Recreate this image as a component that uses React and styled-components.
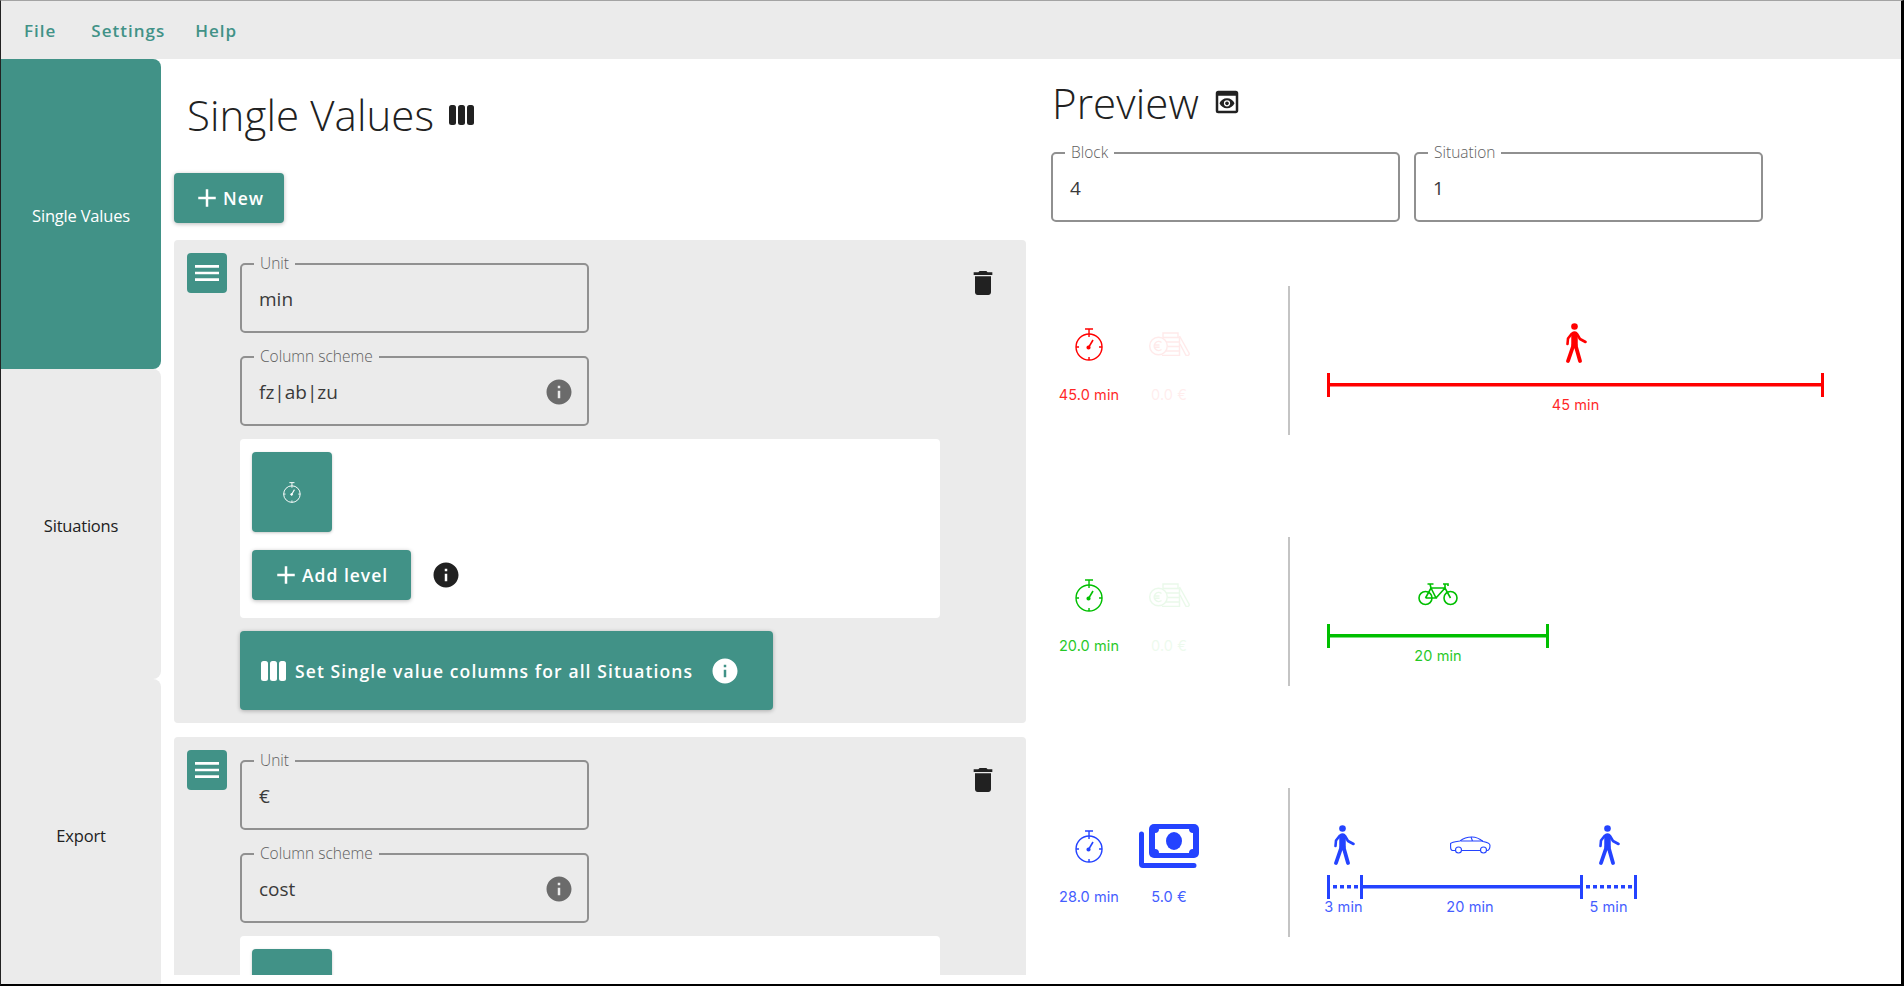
import React from "react";
import styled, { createGlobalStyle } from "styled-components";
import { MdPreview, MdDelete, MdInfo, MdAdd, MdMenu } from "react-icons/md";

const TEAL = "#419287";
const UI_FONT = '"Open Sans", "Noto Sans", sans-serif';

const Global = createGlobalStyle`
  * { box-sizing: border-box; }
  html, body { margin: 0; padding: 0; height: 100%; overflow: hidden; background: #fff; }
  body { font-family: ${UI_FONT}; color: #212121; }
`;

const Frame = styled.div`
  width: 1904px;
  height: 986px;
  display: flex;
  flex-direction: column;
  overflow: hidden;
  border-top: 1px solid #a3a3a3;
  border-left: 1px solid #222;
  border-right: 3px solid #000;
  border-bottom: 2px solid #000;
`;

const MenuBar = styled.nav`
  height: 58px;
  flex: none;
  background: #ebebeb;
  display: flex;
  align-items: center;
  padding-left: 23px;
  gap: 30px;
`;

const MenuItem = styled.span`
  color: ${TEAL};
  font-size: 17px;
  font-weight: 600;
  letter-spacing: 1px;
  &:first-child {
    margin-right: 5px;
  }
`;

const Main = styled.div`
  flex: 1;
  min-height: 0;
  display: flex;
`;

const Sidebar = styled.aside`
  width: 160px;
  flex: none;
  overflow: hidden;
  display: flex;
  flex-direction: column;
`;

const Tab = styled.div`
  height: 310px;
  flex: none;
  display: flex;
  align-items: center;
  justify-content: center;
  padding-top: 2px;
  font-size: 16.5px;
  letter-spacing: -0.2px;
  border-radius: 0 8px 8px 0;
  background: ${(p) => (p.$active ? TEAL : "#ebebeb")};
  color: ${(p) => (p.$active ? "#fff" : "#212121")};
`;

const EditorColumn = styled.section`
  width: 879px;
  height: 916px;
  flex: none;
  overflow: hidden;
  padding-left: 13px;
`;

const PageTitle = styled.h1`
  margin: 0;
  display: flex;
  align-items: center;
  font-size: 42px;
  font-weight: 350;
  letter-spacing: 0.1px;
  color: #212121;
`;

const EditorTitle = styled(PageTitle)`
  height: 114px;
  padding: 0 0 3px 13px;
  gap: 15px;
`;

const PreviewTitle = styled(PageTitle)`
  height: 93px;
  padding: 0 0 7px 4px;
  gap: 13px;
`;

const PrimaryButton = styled.button`
  display: flex;
  align-items: center;
  border: none;
  border-radius: 4px;
  background: ${TEAL};
  color: #fff;
  font-family: ${UI_FONT};
  font-size: 17.5px;
  font-weight: 600;
  letter-spacing: 1px;
  height: 50px;
  box-shadow: 0 1px 4px rgba(0, 0, 0, 0.28);
  padding: 0;
`;

const NewButton = styled(PrimaryButton)`
  width: 110px;
  padding-left: 18px;
  gap: 1px;
  margin-bottom: 17px;
`;

const AddButton = styled(PrimaryButton)`
  width: 159px;
  padding-left: 19px;
  gap: 1px;
`;

const ColumnsButton = styled(PrimaryButton)`
  width: 533px;
  height: 79px;
  padding-left: 21px;
  gap: 9px;
  letter-spacing: 1.1px;
`;

const ButtonInfo = styled.span`
  display: flex;
  margin-left: 8px;
`;

const Card = styled.article`
  width: 852px;
  display: flex;
  gap: 13px;
  background: #ebebeb;
  border-radius: 4px;
  padding: 13px;
  margin-bottom: 14px;
`;

const Handle = styled.div`
  width: 40px;
  height: 40px;
  flex: none;
  border-radius: 4px;
  background: ${TEAL};
  color: #fff;
  display: flex;
  align-items: center;
  justify-content: center;
`;

const CardBody = styled.div`
  width: 700px;
  flex: none;
  display: flex;
  flex-direction: column;
  padding-top: 10px;
`;

const Field = styled.div`
  position: relative;
  width: 349px;
  height: 70px;
  flex: none;
  display: flex;
  align-items: center;
  justify-content: space-between;
  border: 2px solid #909090;
  border-radius: 5px;
  padding: 1px 13px 0 17px;
  font-size: 19px;
  color: #3a3a3a;
`;

const FieldLabel = styled.span`
  position: absolute;
  top: -11px;
  left: 12px;
  padding: 0 6px;
  font-size: 15.5px;
  line-height: 18px;
  font-weight: 300;
  color: #5e5e5e;
  background: ${(p) => p.$bg};
`;

const FieldStack = styled.div`
  display: flex;
  flex-direction: column;
  gap: 23px;
  margin-bottom: 13px;
`;

const LevelPanel = styled.div`
  background: #fff;
  border-radius: 4px;
  padding: 13px 12px 18px;
  margin-bottom: 13px;
`;

const LevelTile = styled.div`
  width: 80px;
  height: 80px;
  border-radius: 4px;
  background: ${TEAL};
  color: #fff;
  display: flex;
  align-items: center;
  justify-content: center;
  box-shadow: 0 1px 3px rgba(0, 0, 0, 0.22);
  margin-bottom: 18px;
`;

const LevelActions = styled.div`
  display: flex;
  align-items: center;
  gap: 20px;
`;

const InfoMark = styled.span`
  display: flex;
  color: ${(p) => p.$color};
`;

const Trash = styled.div`
  display: flex;
  color: #212121;
  margin: 14px 0 0 14px;
`;

const PreviewColumn = styled.section`
  flex: 1;
  min-width: 0;
  padding-left: 8px;
`;

const SelectRow = styled.div`
  display: flex;
  gap: 14px;
  margin: 0 0 64px 3px;
`;

const ChoiceRow = styled.div`
  display: flex;
  height: 149px;
  margin-bottom: 102px;
`;

const Stats = styled.div`
  width: 240px;
  flex: none;
  display: flex;
  align-items: flex-start;
  padding: 36px 0 0 1px;
`;

const Stat = styled.div`
  width: 80px;
  display: flex;
  flex-direction: column;
  align-items: center;
  color: ${(p) => p.$color};
  opacity: ${(p) => (p.$muted ? 0.08 : 1)};
`;

const StatIcon = styled.div`
  height: 44px;
  display: flex;
  align-items: center;
  justify-content: center;
`;

const MetricText = styled.span`
  font-family: Inter, "Liberation Sans", sans-serif;
  font-size: 14.5px;
  letter-spacing: 0.1px;
  line-height: 20px;
  white-space: nowrap;
  opacity: 0.85;
`;

const StatLabel = styled(MetricText)`
  margin-top: 19px;
`;

const Divider = styled.div`
  width: 2px;
  flex: none;
  background: #c4c4c4;
`;

const Journey = styled.div`
  display: flex;
  margin-left: 37px;
  padding-top: 37px;
  align-items: flex-start;
`;

const Leg = styled.div`
  display: flex;
  flex-direction: column;
  align-items: center;
  color: ${(p) => p.$color};
`;

const LegIcon = styled.div`
  height: 40px;
  margin-bottom: 10px;
  display: flex;
  align-items: center;
  justify-content: center;
  width: 60px;
`;

const Track = styled.div`
  width: 100%;
  height: 24px;
  border-left: 3px solid currentColor;
  border-right: ${(p) => (p.$last ? "3px solid currentColor" : "none")};
  background: ${(p) =>
    p.$dotted
      ? "repeating-linear-gradient(90deg, transparent 0 3px, currentColor 3px 7px) center / 100% 3.5px no-repeat"
      : "linear-gradient(currentColor, currentColor) center / 100% 3.5px no-repeat"};
`;

const LegLabel = styled(MetricText)`
  line-height: 16px;
`;

function Columns({ width = 25, height = 20, color = "currentColor" }) {
  return (
    <svg width={width} height={height} viewBox="0 0 25 20" fill={color} aria-hidden="true">
      <rect x="0" y="0" width="7" height="20" rx="2.5" />
      <rect x="9" y="0" width="7" height="20" rx="2.5" />
      <rect x="18" y="0" width="7" height="20" rx="2.5" />
    </svg>
  );
}

function Timer({ size = 33, strokeWidth = 1.4 }) {
  return (
    <svg width={size * 0.85} height={size} viewBox="0 0 28 33" fill="none" stroke="currentColor" strokeWidth={strokeWidth} aria-hidden="true">
      <path d="M10 1h8M14 1v5" />
      <circle cx="14" cy="19" r="13" />
      <path d="M14 6v3M14 29v3M1 19h3M24 19h3" />
      <path d="M13.5 19.5L18 12" strokeWidth={strokeWidth * 1.1} />
      <circle cx="13.500" cy="19.500" r="1.400" fill="currentColor" />
    </svg>
  );
}

function Coins() {
  return (
    <svg width="41" height="24" viewBox="0 0 41 24" fill="none" stroke="currentColor" strokeWidth="1.4" aria-hidden="true">
      <circle cx="9.500" cy="14" r="8.800" />
      <path d="M12.500 10.500a4.500 4.500 0 1 0 0 7M5 13h5.500M5 15.200h5.500" />
      <path d="M14 1h15v4.500H14zM15 5.500h15.500V10H17M18 10h12.500v4.500H19M19 14.500h11.500V19H18M17 19h13.500v4.500H13" />
      <path d="M30.500 4l9.500 17a1.800 1.800 0 0 1-3.500 1.500L31 12" />
    </svg>
  );
}

function Banknotes() {
  return (
    <svg width="60" height="44" viewBox="0 0 60 44" aria-hidden="true">
      <path d="M0 10a2.500 2.500 0 0 1 5 0v29h50a2.500 2.500 0 0 1 0 5H4a4 4 0 0 1-4-4z" fill="currentColor" />
      <rect x="10" y="0" width="50" height="34" rx="5" fill="currentColor" />
      <path
        d="M20 5h30a4 4 0 0 0 4 4v16a4 4 0 0 0-4 4H20a4 4 0 0 0-4-4V9a4 4 0 0 0 4-4z"
        fill="#fff"
      />
      <ellipse cx="35" cy="17" rx="8" ry="9" fill="currentColor" />
    </svg>
  );
}

function Walker() {
  return (
    <svg width="22" height="40" viewBox="0 0 22 40" fill="none" stroke="currentColor" strokeLinecap="round" strokeLinejoin="round" aria-hidden="true">
      <circle cx="9.500" cy="3.500" r="3.300" fill="currentColor" stroke="none" />
      <path d="M9.500 11.500v10" strokeWidth="6.500" />
      <path d="M8.500 22L3 38M10.500 22l4.500 16" strokeWidth="3.800" />
      <path d="M6.500 11L3 15.500 2.500 21" strokeWidth="2.600" />
      <path d="M12 11l3 5 5.500 3" strokeWidth="2.600" />
    </svg>
  );
}

function Bike() {
  return (
    <svg width="40" height="24" viewBox="0 0 40 24" fill="none" stroke="currentColor" strokeWidth="1.6" aria-hidden="true">
      <circle cx="7.500" cy="16" r="6.500" />
      <circle cx="32.500" cy="16" r="6.500" />
      <path d="M7.500 16L13 6h14l5.500 10M13 6l5 10H7.500M27 6l-9 10" />
      <path d="M9.500 2h6M12 2l1 4M25 2h5v2M27 2v4" />
    </svg>
  );
}

function Car() {
  return (
    <svg width="41" height="18" viewBox="0 0 41 18" fill="none" stroke="currentColor" strokeWidth="1.1" aria-hidden="true">
      <path d="M5.500 14.500H2.500C1 14.500.6 13 .6 11V7.500C2 6 7 5.500 10 5 13 2.500 17 1 22 1c4 0 8 2 11 4.500 3 .5 7 1.500 7 4 0 2.500-1 5-3 5h-.5M30.500 14.500h-19" />
      <path d="M11 5h22M21 1l1.500 4" />
      <circle cx="8.500" cy="14" r="3" />
      <circle cx="33.500" cy="14" r="3" />
    </svg>
  );
}

const LEG_ICONS = { walk: Walker, bike: Bike, car: Car };
const PX_PER_MINUTE = 11;
const TICK_ALLOWANCE = 2;

const CHOICES = [
  {
    color: "#ff0000",
    time: "45.0 min",
    cost: "0.0 €",
    costMuted: true,
    legs: [{ icon: "walk", minutes: 45 }],
  },
  {
    color: "#00bf00",
    time: "20.0 min",
    cost: "0.0 €",
    costMuted: true,
    legs: [{ icon: "bike", minutes: 20 }],
  },
  {
    color: "#2443ff",
    time: "28.0 min",
    cost: "5.0 €",
    costMuted: false,
    legs: [
      { icon: "walk", minutes: 3, dotted: true },
      { icon: "car", minutes: 20 },
      { icon: "walk", minutes: 5, dotted: true },
    ],
  },
];

const UNITS = [
  { unit: "min", scheme: "fz|ab|zu", full: true },
  { unit: "€", scheme: "cost", full: false },
];

function UnitCard({ unit, scheme, full }) {
  return (
    <Card>
      <Handle>
        <MdMenu size={32} />
      </Handle>
      <CardBody>
        <FieldStack>
          <Field>
            <FieldLabel $bg="#ebebeb">Unit</FieldLabel>
            {unit}
          </Field>
          <Field>
            <FieldLabel $bg="#ebebeb">Column scheme</FieldLabel>
            {scheme}
            <InfoMark $color="#6b6b6b">
              <MdInfo size={30} />
            </InfoMark>
          </Field>
        </FieldStack>
        <LevelPanel>
          <LevelTile>
            <Timer size={21} strokeWidth={1.5} />
          </LevelTile>
          {full && (
            <LevelActions>
              <AddButton>
                <MdAdd size={30} />
                Add level
              </AddButton>
              <InfoMark $color="#212121">
                <MdInfo size={30} />
              </InfoMark>
            </LevelActions>
          )}
        </LevelPanel>
        {full && (
          <ColumnsButton>
            <Columns />
            Set Single value columns for all Situations
            <ButtonInfo>
              <MdInfo size={30} />
            </ButtonInfo>
          </ColumnsButton>
        )}
      </CardBody>
      <Trash>
        <MdDelete size={32} />
      </Trash>
    </Card>
  );
}

function ChoicePreview({ color, time, cost, costMuted, legs }) {
  return (
    <ChoiceRow>
      <Stats>
        <Stat $color={color}>
          <StatIcon>
            <Timer />
          </StatIcon>
          <StatLabel>{time}</StatLabel>
        </Stat>
        <Stat $color={color} $muted={costMuted}>
          <StatIcon>{costMuted ? <Coins /> : <Banknotes />}</StatIcon>
          <StatLabel>{cost}</StatLabel>
        </Stat>
      </Stats>
      <Divider />
      <Journey>
        {legs.map((leg, i) => {
          const Icon = LEG_ICONS[leg.icon];
          const last = i === legs.length - 1;
          return (
            <Leg
              key={i}
              $color={color}
              style={{ width: leg.minutes * PX_PER_MINUTE + (last ? TICK_ALLOWANCE : 0) }}
            >
              <LegIcon>
                <Icon />
              </LegIcon>
              <Track $dotted={leg.dotted} $last={last} />
              <LegLabel>{leg.minutes} min</LegLabel>
            </Leg>
          );
        })}
      </Journey>
    </ChoiceRow>
  );
}

export default function App() {
  return (
    <>
      <Global />
      <Frame>
        <MenuBar>
          <MenuItem>File</MenuItem>
          <MenuItem>Settings</MenuItem>
          <MenuItem>Help</MenuItem>
        </MenuBar>
        <Main>
          <Sidebar>
            <Tab $active>Single Values</Tab>
            <Tab>Situations</Tab>
            <Tab>Export</Tab>
          </Sidebar>
          <EditorColumn>
            <EditorTitle>
              Single Values
              <Columns />
            </EditorTitle>
            <NewButton>
              <MdAdd size={30} />
              New
            </NewButton>
            {UNITS.map((u) => (
              <UnitCard key={u.unit} {...u} />
            ))}
          </EditorColumn>
          <PreviewColumn>
            <PreviewTitle>
              Preview
              <MdPreview size={30} />
            </PreviewTitle>
            <SelectRow>
              <Field>
                <FieldLabel $bg="#fff">Block</FieldLabel>
                4
              </Field>
              <Field>
                <FieldLabel $bg="#fff">Situation</FieldLabel>
                1
              </Field>
            </SelectRow>
            {CHOICES.map((c) => (
              <ChoicePreview key={c.color} {...c} />
            ))}
          </PreviewColumn>
        </Main>
      </Frame>
    </>
  );
}
